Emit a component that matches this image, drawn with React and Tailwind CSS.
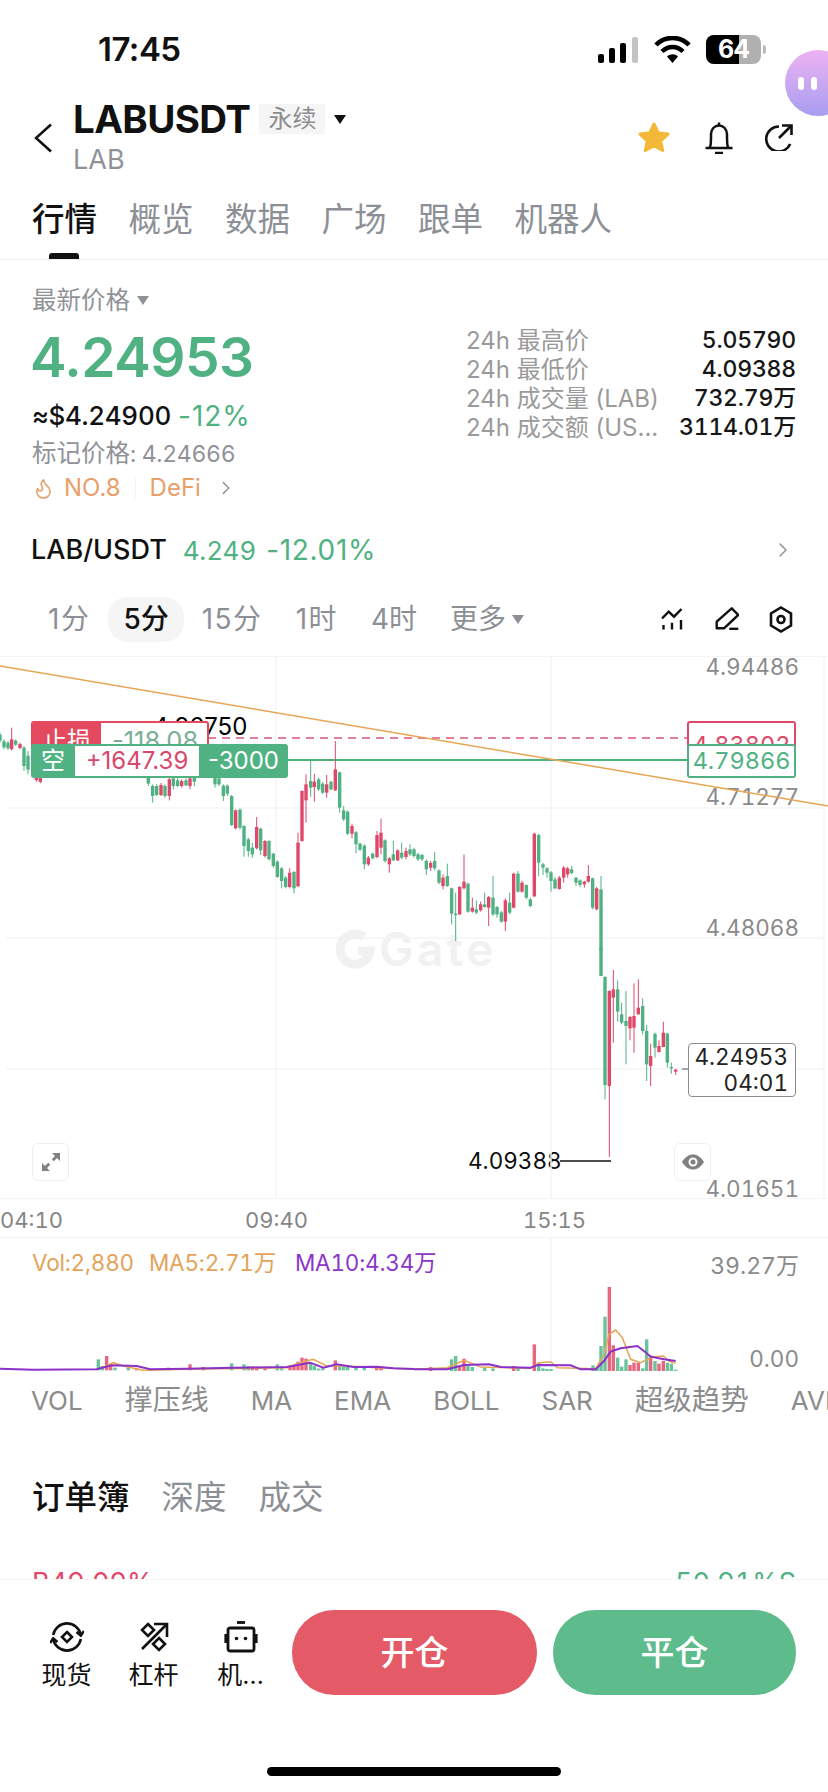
import React from "react";
import { ChevronRight, Flame } from "lucide-react";

const GREEN = "#50b283";
const RED = "#e0486a";

// [x, colour, wickTop, wickBottom, bodyTop, bodyBottom] in tripled chart units
const LEFT = [
  [0,"g",245,275],[12,"g",265,295],[24,"g",270,297],[35,"r",230,298,265,295],[47,"g",265,285],[60,"r",275,295],[72,"g",285,360,290,345],[84,"g",300,370],
  [109,"r",370,392],[121,"r",375,397],[445,"g",370,405],[458,"g",400,455,405,435],[470,"g",400,435,405,432],[483,"r",396,435,402,432],[495,"g",400,440,405,435],
  [508,"r",380,448,385,435],[520,"g",375,415,382,405],[533,"g",380,408,388,405],[545,"r",385,410,390,405],[558,"g",382,405,388,403],[570,"r",378,415,382,405],[583,"g",370,405,375,392],
  [645,"g",375,410,380,400],[657,"g",378,405,382,400],[670,"g",400,450,404,435],[682,"g",400,435,404,428],[695,"g",432,525,435,522],[707,"r",475,535,478,532],[720,"g",472,535,476,530],
  [732,"g",522,617,525,585],[745,"g",560,617,565,600],[757,"g",575,620,590,610],[770,"r",498,595,528,592],[782,"g",530,612,533,598],[795,"r",567,620,570,615],[807,"g",567,628,570,625],
  [820,"g",605,650,608,645],[832,"g",628,680,632,678],[845,"g",648,712,652,690],[857,"g",675,712,680,708],[869,"r",652,712,665,708],[882,"g",660,727,663,712],[894,"r",545,708,575,706],
  [906,"r",418,572,420,570],[918,"r",370,515,400,448],[932,"g",325,437,390,410],[943,"r",368,452,392,408],[956,"g",380,420,385,415],[968,"g",392,430,398,425],[980,"r",372,440,400,425],
  [993,"g",390,418,392,415],[1006,"r",270,420,355,418],[1019,"g",362,485,364,470],[1031,"g",465,510,478,505],[1043,"g",478,552,482,548],[1056,"r",518,562,525,548],[1068,"g",540,607,544,580],
  [1080,"g",575,600,578,596],[1093,"g",580,655,584,640],[1105,"r",615,645,620,640],[1118,"g",605,625,608,622],[1131,"r",540,622,552,618],[1143,"r",503,610,545,590],[1155,"g",565,635,568,630],
  [1168,"r",618,665,622,640],[1180,"g",570,630,610,628],[1193,"r",595,630,598,628],[1205,"g",575,625,605,620],[1218,"r",590,625,600,618],[1230,"g",580,615,595,610],
];
const MIDDLE = [
  [0,"g",590,620,595,615],[12,"g",605,630,610,625],[24,"g",608,630,612,625],[37,"g",625,672,630,655],[50,"r",630,660,636,650],[62,"g",603,658,630,652],[75,"g",655,700,658,695],[87,"r",670,715,680,705],
  [100,"g",638,708,675,705],[113,"g",710,820,712,788],[125,"g",725,870,788,792],[137,"r",705,792,708,790],[150,"r",610,715,692,712],[162,"g",695,785,698,782],[175,"r",740,785,770,782],[187,"g",748,790,775,785],
  [200,"r",752,782,760,778],[212,"g",725,770,760,768],[224,"r",735,825,738,770],[237,"g",675,795,740,790],[249,"g",765,800,768,790],[262,"g",780,815,784,812],[274,"r",742,840,748,812],[287,"g",725,790,755,785],
  [299,"r",665,772,668,770],[312,"g",660,725,668,722],[324,"r",690,725,695,722],[337,"g",700,745,702,740],[349,"g",740,768,745,765],[361,"r",545,738,548,736],[374,"g",548,675,552,635],[387,"g",635,672,640,650],
  [399,"g",648,680,652,665],[411,"g",660,722,664,690],[423,"g",678,715,685,712],[436,"r",675,716,680,714],[449,"r",645,695,650,680],[461,"r",648,680,652,670],[473,"g",645,670,655,666],[486,"g",678,705,680,695],
  [498,"g",685,708,688,702],[511,"r",690,710,692,700],[523,"r",642,695,675,692],[536,"g",680,775,682,770],[548,"r",708,778,712,775],[561,"g",675,900,715,900],
];
const RIGHT = [
  [561,"g",-10,75,-10,75],[573,"g",75,445,78,402],[586,"r",118,618,120,405],[598,"r",57,275,115,140],[611,"g",88,212,115,182],[623,"g",155,220,190,215],[636,"g",120,340,210,225],[648,"r",195,268,198,232],
  [660,"r",97,305,195,230],[673,"r",85,190,170,190],[686,"g",142,250,165,240],[698,"g",222,390,240,340],[710,"r",278,405,315,345],[723,"g",245,320,248,290],[735,"r",268,305,285,303],[748,"r",212,288,245,288],
  [760,"g",245,350,248,335],[772,"g",335,368,348,352],[785,"r",353,372,356,362],
];

function Candles({ rows, originX, originY }) {
  return rows.map(([zx, c, wt, wb, bt, bb]) => {
    const x = originX + zx / 3;
    const color = c === "g" ? GREEN : RED;
    const inset = (wb - wt) * 0.2;
    const top = originY + (bt ?? wt + inset) / 3;
    const bottom = originY + (bb ?? wb - inset) / 3;
    return (
      <g key={`${originX}-${originY}-${zx}`} fill={color}>
        <rect x={x - 0.5} y={originY + wt / 3} width="1" height={(wb - wt) / 3} />
        <rect x={x - 1.7} y={top} width="3.4" height={Math.max(bottom - top, 1)} />
      </g>
    );
  });
}

const AXIS = [
  ["4.94486", -5],
  ["4.71277", 125],
  ["4.48068", 256],
  ["4.01651", 517],
];

function PriceChart() {
  return (
    <div className="relative h-[542px] overflow-hidden border-t border-[#f4f4f4]">
      {AXIS.map(([v, top]) => (
        <div key={v} className="absolute right-[29px] text-[22.5px] leading-[30px] tabular-nums text-[#8a8a8a]" style={{ top }}>{v}</div>
      ))}
      <div className="absolute left-[153px] top-[58px] text-[24px] leading-[24px] text-black">4.96750</div>
      <div className="absolute left-[468px] top-[489px] text-[22.5px] leading-[30px] tabular-nums text-[#0c0c0c]">4.09388</div>
      {/* Exchange watermark */}
      <div className="absolute left-[379px] top-[264px] text-[46px] font-semibold leading-[56px] tracking-[3.5px] text-[#f1f1f1]">Gate</div>
      <svg className="absolute inset-0" width="828" height="542" viewBox="0 656 828 542">
        <g stroke="#f5f5f5" strokeWidth="1.5">
          <line x1="276" y1="656" x2="276" y2="1198" />
          <line x1="551" y1="656" x2="551" y2="1198" />
          <line x1="824" y1="656" x2="824" y2="1198" />
          <line x1="6" y1="807" x2="824" y2="807" />
          <line x1="6" y1="937" x2="824" y2="937" />
          <line x1="6" y1="1068" x2="824" y2="1068" />
        </g>
        <g fill="none" stroke="#f1f1f1" strokeWidth="9">
          <path d="M364 936 A15 15 0 1 0 370 950 L358 950" />
        </g>
        <line x1="208" y1="737" x2="688" y2="737" stroke="#d9577a" strokeWidth="1.5" strokeDasharray="8 6" />
        <line x1="288" y1="759" x2="688" y2="759" stroke={GREEN} strokeWidth="2" />
        <Candles rows={LEFT} originX={0} originY={650} />
        <Candles rows={MIDDLE} originX={414} originY={650} />
        <Candles rows={RIGHT} originX={414} originY={950} />
        <line x1="0" y1="665" x2="828" y2="805" stroke="#e7a654" strokeWidth="1.5" />
        <line x1="560" y1="1160" x2="611" y2="1160" stroke="#111" strokeWidth="1.5" />
        <line x1="682" y1="1068" x2="688" y2="1068" stroke="#555" strokeWidth="1" />
      </svg>

      {/* Stop-loss tag, partly under the position tag */}
      <div className="absolute left-[31px] top-[64px] flex h-[40px] w-[178px] overflow-hidden rounded-[3px] border-2 border-[#e4495f] bg-white">
        <div className="flex w-[68px] justify-center bg-[#e4495f] pt-[3px] text-[24px] leading-[30px] text-white">止损</div>
        <div className="flex-1 pl-[11px] pt-[3px] text-[25.5px] leading-[30px] text-[#7bae96]">-118.08</div>
      </div>
      <div className="absolute left-[31px] top-[87px] flex h-[34px] w-[257px] items-center rounded-[3px] bg-[#50b283] text-[24px]">
        <div className="w-[44px] text-center text-white">空</div>
        <div className="h-[30px] w-[124px] bg-white text-center leading-[30px] text-[#d9476b]">+1647.39</div>
        <div className="flex-1 text-center text-white">-3000</div>
      </div>

      <div className="absolute left-[687px] top-[64px] h-[40px] w-[109px] rounded-[3px] border-2 border-[#e0486a] text-center text-[23.5px] leading-[44px] tabular-nums text-[#e0486a]">4.83802</div>
      <div className="absolute left-[687px] top-[87px] h-[34px] w-[109px] rounded-[3px] border-2 border-[#50b283] bg-white text-center text-[23.5px] leading-[30px] tabular-nums text-[#50b283]">4.79866</div>

      <div className="absolute left-[688px] top-[386px] h-[54px] w-[108px] rounded-[4px] border border-[#8c8c8c] bg-white pr-[7px] text-right text-[22.5px] leading-[26px] tabular-nums text-[#222]">
        <div>4.24953</div>
        <div>04:01</div>
      </div>

      <div className="absolute left-[32px] top-[486px] flex h-[38px] w-[37px] items-center justify-center rounded-[6px] border border-[#efefef] bg-white">
        <svg width="20" height="20" viewBox="0 0 20 20" fill="#808080">
          <path d="M11 1h8v8l-3-3-3.2 3.2-2-2L14 4zM9 19H1v-8l3 3 3.2-3.2 2 2L6 16z" />
        </svg>
      </div>
      <div className="absolute left-[674px] top-[486px] flex h-[38px] w-[37px] items-center justify-center rounded-[6px] border border-[#efefef] bg-white">
        <svg width="24" height="16" viewBox="0 0 24 16">
          <path d="M1 8c3-5 7-7.500 11-7.500S20 3 23 8c-3 5-7 7.500-11 7.500S4 13 1 8z" fill="#808080" />
          <circle cx="12" cy="8" r="4.500" fill="#fff" />
          <circle cx="12" cy="8" r="2.500" fill="#808080" />
        </svg>
      </div>
    </div>
  );
}

const VOL_LEFT = [[295,"g",775],[307,"g",795],[320,"r",765],[332,"r",790],[345,"g",800],[385,"g",800],[410,"r",802],[505,"r",800],[570,"r",790],[610,"r",798],[695,"g",787],[732,"g",790],[745,"g",795],[757,"r",796],[770,"r",797],[795,"r",798],[832,"g",790],[845,"g",797],[870,"r",794],[882,"r",792],[894,"r",782],[906,"r",770],[918,"r",773],[932,"g",785],[943,"g",795],[956,"g",803],[968,"g",802],[1006,"r",778],[1019,"g",795],[1031,"g",797],[1043,"g",797],[1068,"g",800],[1093,"g",800],[1130,"r",795],[1143,"r",800]];
const VOL_RIGHT = [[50,"r",468],[113,"g",445],[125,"g",435],[137,"r",465],[150,"r",443],[162,"g",465],[175,"g",468],[212,"g",470],[237,"g",472],[299,"r",465],[312,"g",470],[361,"r",400],[374,"g",455],[387,"g",472],[399,"g",474],[411,"g",474],[537,"g",463],[549,"g",470],[561,"g",405],[573,"g",317],[586,"r",228],[598,"r",403],[611,"g",440],[623,"g",467],[636,"g",445],[648,"r",462],[660,"r",455],[673,"r",455],[686,"g",472],[698,"g",385],[710,"r",433],[723,"g",450],[735,"r",458],[748,"r",450],[760,"g",455],[772,"g",458],[785,"g",476]];

const toPts = (pts, ox, oy) => pts.map(([x, y]) => `${ox + x / 3},${oy + y / 3}`).join(" ");

function VolumeChart() {
  return (
    <div className="relative h-[133px] border-t border-[#f4f4f4] tabular-nums">
      <div className="flex pl-[32px] pt-[10px] text-[22.5px] leading-[30px] tracking-[-0.2px]">
        <span className="text-[#e3a35a]">Vol:2,880</span>
        <span className="ml-[15px] text-[#e3a35a]">MA5:2.71万</span>
        <span className="ml-[19px] text-[#8b36c8]">MA10:4.34万</span>
      </div>
      <div className="absolute right-[29px] top-[13px] text-[23px] leading-[30px] text-[#8a8a8a]">39.27万</div>
      <div className="absolute right-[29px] top-[106px] text-[22.5px] leading-[30px] text-[#8a8a8a]">0.00</div>
      <svg className="absolute inset-0" width="828" height="133" viewBox="0 1237 828 133">
        <line x1="551" y1="1237" x2="551" y2="1370" stroke="#f5f5f5" strokeWidth="1.5" />
        {VOL_LEFT.map(([zx, c, t]) => (
          <rect key={`l${zx}`} x={zx / 3 - 1.7} y={1100 + t / 3} width="3.400" height={(808 - t) / 3} fill={c === "g" ? "#6bc39b" : "#e8677f"} />
        ))}
        {VOL_RIGHT.map(([zx, c, t]) => (
          <rect key={`r${zx}`} x={414 + zx / 3 - 1.7} y={1210 + t / 3} width="3.400" height={(480 - t) / 3} fill={c === "g" ? "#6bc39b" : "#e8677f"} />
        ))}
        <polyline fill="none" stroke="#e7a654" strokeWidth="1.5" points={toPts([[300,803],[340,785],[370,795],[430,808],[560,805],[860,800],[900,785],[940,775],[980,795],[1040,795],[1130,800],[1242,805]],0,1100)} />
        <polyline fill="none" stroke="#e7a654" strokeWidth="1.5" points={toPts([[0,475],[100,470],[150,448],[200,468],[350,472],[375,455],[410,452],[430,470],[545,473],[570,430],[585,370],[605,357],[625,380],[650,445],[680,455],[700,445],[720,437],[748,435],[765,450],[785,458]],414,1210)} />
        <polyline fill="none" stroke="#8b30c8" strokeWidth="2" points={toPts([[0,803],[100,806],[290,805],[335,793],[410,795],[450,805],[560,803],[700,800],[860,798],[930,785],[970,800],[1010,790],[1060,798],[1130,797],[1180,802],[1242,804]],0,1100)} />
        <polyline fill="none" stroke="#8b30c8" strokeWidth="2" points={toPts([[0,475],[100,475],[150,462],[225,460],[260,468],[350,470],[370,462],[470,463],[500,475],[545,475],[570,450],[590,422],[620,412],[670,405],[690,420],[710,437],[750,445],[785,450]],414,1210)} />
      </svg>
    </div>
  );
}

function Triangle({ className }) {
  return <span className={`inline-block h-0 w-0 border-x-[6px] border-t-[9px] border-x-transparent ${className}`} />;
}

export default function App() {
  return (
    <div className="relative h-[1792px] w-[828px] overflow-hidden bg-white font-[Inter,'Noto_Sans_CJK_SC',sans-serif] text-[#111]">
      {/* Status bar */}
      <div className="flex h-[92px] items-start pl-[98px] pr-[62px] pt-[29px]">
        <div className="text-[33px] font-semibold leading-[40px] tracking-[-0.5px]">17:45</div>
        <div className="ml-auto flex items-center gap-[15px] pt-[6px]">
          <svg width="41" height="26" viewBox="0 0 41 26">
            <rect x="0" y="17" width="6" height="9" rx="2" fill="#000" />
            <rect x="11" y="11" width="6" height="15" rx="2" fill="#000" />
            <rect x="22" y="6" width="6" height="20" rx="2" fill="#000" />
            <rect x="34" y="0" width="6" height="26" rx="2" fill="#c4c4c4" />
          </svg>
          <svg width="37" height="27" viewBox="0 0 37 27" fill="none" stroke="#000" strokeWidth="4.500">
            <path d="M2 9C11-.5 26-.5 35 9" />
            <path d="M8 15.500c6-6 15-6 21 0" />
            <path d="M18.500 27l-5.500-6.500c3-3 8-3 11 0z" fill="#000" stroke="none" />
          </svg>
          <div className="flex items-center">
            <div className="relative flex h-[29px] w-[55px] items-center justify-center overflow-hidden rounded-[8px] bg-[#b0b0b0]">
              <div className="absolute inset-y-0 left-0 w-[33px] bg-black" />
              <span className="relative text-[25px] font-bold leading-none tracking-[-1px] text-white">64</span>
            </div>
            <div className="ml-[2px] h-[9px] w-[3px] rounded-r-full bg-[#b9b9b9]" />
          </div>
        </div>
      </div>

      {/* Floating assistant bubble */}
      <div className="absolute left-[785px] top-[50px] flex h-[66px] w-[66px] items-center gap-[7px] rounded-full bg-gradient-to-b from-[#eeb2f2] to-[#a79df1] pl-[13px]">
        <span className="h-[13px] w-[6px] rounded-full bg-white" />
        <span className="h-[13px] w-[6px] rounded-full bg-white" />
      </div>

      {/* Symbol header */}
      <div className="flex h-[98px] pl-[34px] pr-[34px]">
        <svg className="mt-[31px]" width="18" height="30" viewBox="0 0 18 30" fill="none" stroke="#111" strokeWidth="2.500">
          <path d="M17 1.500L2 15l15 13.500" />
        </svg>
        <div className="ml-[21px] pt-[7px]">
          <div className="flex h-[40px] items-center">
            <span className="text-[38.5px] font-bold leading-[40px] tracking-[-0.6px]">LABUSDT</span>
            <span className="ml-[9px] flex h-[30px] w-[66px] items-center justify-center bg-[#f5f5f5] text-[24px] text-[#8d8d8d]">永续</span>
            <Triangle className="ml-[9px] border-t-[#111]" />
          </div>
          <div className="mt-[6px] text-[27px] leading-[30px] text-[#8f9297]">LAB</div>
        </div>
        <div className="ml-auto flex items-start gap-[31px] pt-[29px]">
          <svg className="mr-[3px]" width="34" height="32" viewBox="0 0 34 32"><path d="M17 3l4.200 8.800 9.800 1.300-7.200 6.700 1.900 9.700L17 25l-8.700 4.500 1.900-9.700L3 13.100l9.800-1.300z" fill="#f3b838" stroke="#f3b838" strokeWidth="3" strokeLinejoin="round" /></svg>
          <svg width="28" height="33" viewBox="0 0 28 33" fill="none" stroke="#111" strokeWidth="2.500">
            <path d="M.5 27h27" />
            <path d="M5 26.500c1-3 1-5 1-9V13a8 8.500 0 0 1 16 0v4.500c0 4 0 6 1 9" />
            <path d="M14 4.500V1.500" />
            <path d="M10 32h8" />
          </svg>
          <svg width="30" height="30" viewBox="0 0 30 30" fill="none" stroke="#111" strokeWidth="2.600">
            <path d="M15 5.500A12.500 12.500 0 1 0 26.200 23" />
            <path d="M15 17L27 5" />
            <path d="M18 4.500h9.500V14" />
          </svg>
        </div>
      </div>

      {/* Page tabs */}
      <div className="relative flex h-[70px] gap-[31.500px] border-b border-[#eeeeee] pl-[32px] pt-[8px] text-[32.5px] leading-[44px] text-[#8c9096]">
        <span className="font-medium text-[#111]">行情</span>
        <span>概览</span>
        <span>数据</span>
        <span>广场</span>
        <span>跟单</span>
        <span>机器人</span>
        <span className="absolute bottom-0 left-[49px] h-[6px] w-[30px] rounded-t-[3px] bg-[#111]" />
      </div>

      {/* Price overview */}
      <div className="flex h-[260px] justify-between px-[32px]">
        <div>
          <div className="mt-[26px] flex h-[28px] items-center text-[24.500px] text-[#8f9297]">
            最新价格
            <Triangle className="ml-[7px] border-t-[#8f9297]" />
          </div>
          <div className="-ml-[2px] mt-[13px] text-[55px] font-semibold leading-[60px] tracking-[-0.5px] text-[#50b283]">4.24953</div>
          <div className="mt-[13px] flex h-[32px] items-center gap-[7px] leading-[32px]">
            <span className="text-[26px] font-medium tabular-nums tracking-[-0.3px]">≈$4.24900</span>
            <span className="text-[28px] tracking-[1px] text-[#50b283]">-12%</span>
          </div>
          <div className="mt-[6px] text-[24.5px] leading-[30px] text-[#8f9297]">
            标记价格<span className="text-[23px] tabular-nums tracking-[-0.3px]">: 4.24666</span>
          </div>
          <div className="mt-[5px] flex h-[28px] items-center text-[24px] text-[#e8a06a]">
            <Flame size={23} strokeWidth={1.6} />
            <span className="ml-[9px]">NO.8</span>
            <span className="mx-[14px] h-[20px] w-px bg-[#f3f3f3]" />
            <span>DeFi</span>
            <ChevronRight size={22} strokeWidth={1.6} className="ml-[14px] text-[#8f9297]" />
          </div>
        </div>
        <div className="w-[330px] pt-[66px] text-[24px] leading-[29px]">
          {[
            ["24h 最高价", "5.05790"],
            ["24h 最低价", "4.09388"],
            ["24h 成交量 (LAB)", "732.79万"],
            ["24h 成交额 (US...", "3114.01万"],
          ].map(([label, value]) => (
            <div key={label} className="flex h-[29px] justify-between">
              <span className="text-[#9a9a9a]">{label}</span>
              <span className="text-[23px] font-medium tabular-nums tracking-[-0.2px] text-[#161616]">{value}</span>
            </div>
          ))}
        </div>
      </div>

      {/* Spot pair link */}
      <div className="flex h-[60px] items-center pl-[31px] pr-[33px]">
        <span className="text-[27px] font-medium tabular-nums">LAB/USDT</span>
        <span className="ml-[16px] text-[26px] tracking-[0.3px] text-[#50b283]">4.249</span>
        <span className="ml-[10px] text-[28px] tracking-[0.7px] text-[#50b283]">-12.01%</span>
        <ChevronRight size={24} strokeWidth={1.5} className="ml-auto text-[#8f9297]" />
      </div>

      {/* Interval selector */}
      <div className="flex h-[76px] items-center gap-[3px] pl-[33px] pr-[35px] pt-[2px] text-[28px] text-[#8c9096]">
        <span className="px-[15px] tracking-[1.5px]">1分</span>
        <span className="flex h-[45px] items-center rounded-[20px] bg-[#f5f5f5] px-[15px] font-medium text-[#111]">5分</span>
        <span className="px-[15px] tracking-[1.5px]">15分</span>
        <span className="px-[15px] tracking-[1.5px]">1时</span>
        <span className="px-[15px]">4时</span>
        <span className="flex items-center pl-[15px]">
          更多
          <Triangle className="ml-[6px] border-x-[5px] border-t-[8px] border-t-[#8c9096]" />
        </span>
        <div className="ml-auto flex items-center gap-[30px]">
          <svg width="24" height="26" viewBox="0 0 24 26" fill="none" stroke="#111" strokeWidth="2.400">
            <path d="M1 12.500L7.700 5.700 13 10.700 20.500 3" />
            <path d="M2.500 19v4.500M11 16.700v6.800M20 14v9.500" />
          </svg>
          <svg width="24" height="26" viewBox="0 0 24 26" fill="none" stroke="#111" strokeWidth="2.400" strokeLinejoin="round">
            <path d="M1.700 22.300v-6.600L16.700 2.300 23.300 9 9 22.300z" />
            <path d="M14.300 22.800h9" />
          </svg>
          <svg width="24" height="27" viewBox="0 0 24 27" fill="none" stroke="#111" strokeWidth="2.600">
            <path d="M12 1.500l10 6v12l-10 6-10-6v-12z" />
            <circle cx="12" cy="13.500" r="3.500" />
          </svg>
        </div>
      </div>

      <PriceChart />

      {/* Time axis */}
      <div className="relative h-[39px] border-t border-[#f4f4f4] text-[22px] leading-[42px] tabular-nums text-[#858585]">
        <span className="absolute left-0">04:10</span>
        <span className="absolute left-[245px]">09:40</span>
        <span className="absolute left-[523px]">15:15</span>
      </div>

      <VolumeChart />

      {/* Indicator strip */}
      <div className="flex h-[60px] items-center gap-[42px] whitespace-nowrap pl-[31px] text-[26px] text-[#8c8c8c]">
        <span>VOL</span>
        <span className="text-[28px]">撑压线</span>
        <span>MA</span>
        <span>EMA</span>
        <span>BOLL</span>
        <span>SAR</span>
        <span className="text-[28.5px]">超级趋势</span>
        <span>AVL</span>
      </div>

      {/* Order book, cut off by the action bar */}
      <div className="h-[149px] overflow-hidden px-[32px]">
        <div className="flex gap-[32px] pt-[48px] text-[32.5px] leading-[40px] text-[#8c9096]">
          <span className="font-medium text-[#111]">订单簿</span>
          <span>深度</span>
          <span>成交</span>
        </div>
        <div className="mt-[49px] flex justify-between text-[27px] leading-[32px] tabular-nums">
          <span className="text-[#e0486a]">B49.09%</span>
          <span className="text-[#50b283]">50.91%S</span>
        </div>
      </div>

      {/* Action bar */}
      <div className="h-[213px] border-t border-[#f6f6f6] bg-white">
        <div className="flex pl-[23px] pr-[32px] pt-[30px]">
          {[
            ["现货", (
              <svg width="34" height="34" viewBox="0 0 34 34" fill="none" stroke="#111" strokeWidth="2.600">
                <path d="M3.200 15A14 14 0 0 1 30.800 15" />
                <path d="M34 11l-3.200 4.500-4.300-3.500" />
                <path d="M30.800 19A14 14 0 0 1 3.200 19" />
                <path d="M0 23l3.200-4.500 4.300 3.500" />
                <path d="M17 12l5 5-5 5-5-5z" />
              </svg>
            )],
            ["杠杆", (
              <svg width="30" height="30" viewBox="0 0 30 30" fill="none" stroke="#111" strokeWidth="2.600">
                <path d="M3 27L28 2" />
                <path d="M15 2h13v13" />
                <path d="M9 2l6 6-6 6-6-6z" />
                <path d="M20 16l6 6-6 6-6-6z" />
              </svg>
            )],
            ["机…", (
              <svg width="34" height="34" viewBox="0 0 34 34" fill="none" stroke="#111" strokeWidth="2.800">
                <rect x="4" y="8" width="26" height="23" rx="2" />
                <path d="M13 2.500h8" />
                <path d="M2 14v9M32 14v9" strokeWidth="3.200" />
                <circle cx="12.500" cy="18.500" r="1.800" fill="#111" stroke="none" />
                <circle cx="21.500" cy="18.500" r="1.800" fill="#111" stroke="none" />
              </svg>
            )],
          ].map(([label, icon]) => (
            <div key={label} className="flex w-[87px] flex-col items-center pt-[10px]">
              <div className="flex h-[34px] items-center">{icon}</div>
              <div className="mt-[6px] text-[25px] leading-[30px]">{label}</div>
            </div>
          ))}
          <div className="ml-[8px] flex h-[85px] w-[245px] items-center justify-center rounded-[42px] bg-[#e45a66] text-[34px] font-medium text-white">开仓</div>
          <div className="ml-[16px] flex h-[85px] w-[243px] items-center justify-center rounded-[42px] bg-[#5dbb8c] text-[34px] font-medium text-white">平仓</div>
        </div>
        <div className="mx-auto mt-[72px] h-[9px] w-[294px] rounded-full bg-black" />
      </div>
    </div>
  );
}
